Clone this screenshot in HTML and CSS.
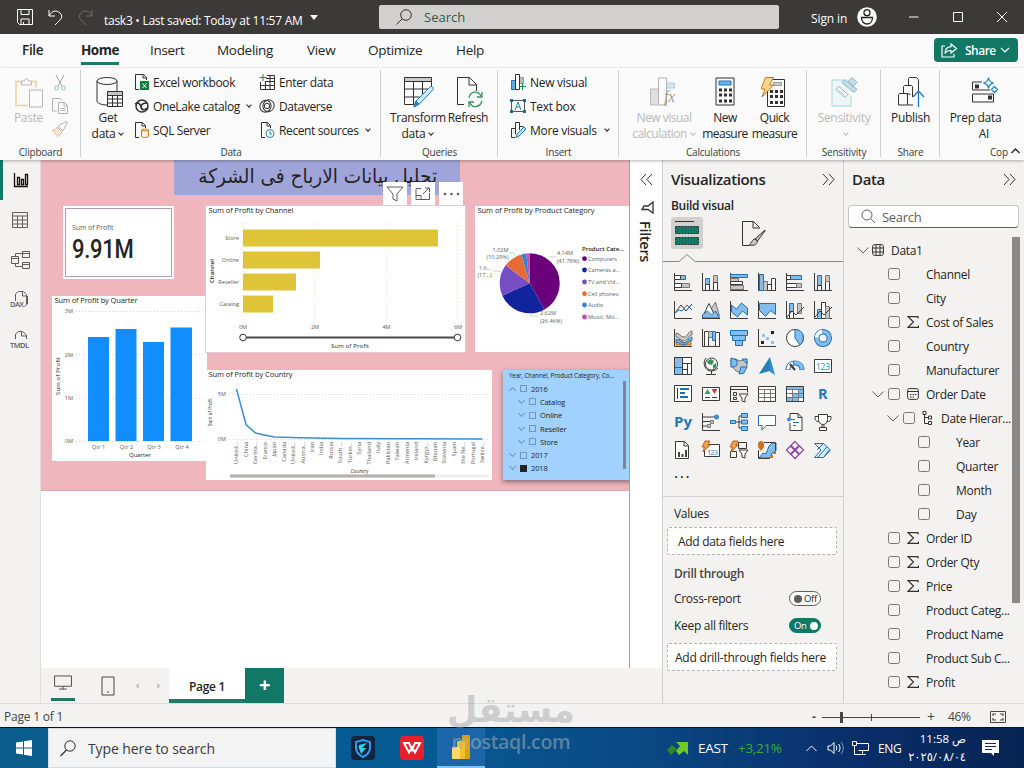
FILE: index.html
```html
<!DOCTYPE html>
<html lang="en">
  <head>
    <meta charset="UTF-8" />
    <meta name="viewport" content="width=device-width, initial-scale=1.0" />
    <title>task3</title>
    <link rel="stylesheet" href="styles.css">
  </head>
  <body>
    <div class="app">
      <header class="titlebar">
        <svg class="tb-save" width="16" height="16" viewBox="0 0 16 16"><path d="M.5.5h15v15h-13l-2-2zM4 .5v5h8v-5M4 15v-5h8v5M6.500 15v-2"/></svg>
        <svg class="tb-undo" width="15" height="16" viewBox="0 0 15 16"><path d="M1 1v6h6M1 7c3-6 8-6 11-3s2 5-1 8l-4 4"/></svg>
        <svg class="tb-redo" width="15" height="16" viewBox="0 0 15 16"><path d="M14 1v6H8M14 7C11 1 6 1 3 4s-2 5 1 8l4 4"/></svg>
        <span class="doc-name">task3 • Last saved: Today at 11:57 AM</span>
        <span class="caret"></span>
        <div class="title-search">
          <svg width="16" height="16" viewBox="0 0 16 16"><circle cx="10" cy="6" r="5.300"/><path d="M6 10l-5.500 5.500"/></svg>
          <span>Search</span>
        </div>
        <span class="signin">Sign in</span>
        <svg class="avatar" width="20" height="20" viewBox="0 0 20 20"><circle cx="10" cy="10" r="9.800" fill="#fff" stroke="none"/><circle cx="10" cy="5.700" r="3"/><path d="M4.500 10.500h11c0 4-2.500 6.500-5.500 6.500s-5.500-2.500-5.500-6.500z"/></svg>
        <svg class="win-btns" width="98" height="12" viewBox="0 0 98 12"><path d="M0 6h9.500M44.500 1.500h9v9h-9zM88 1l10 10M98 1L88 11"/></svg>
      </header>

      <nav class="tabs">
        <span class="tab file">File</span>
        <span class="tab home">Home</span>
        <span class="tab insert">Insert</span>
        <span class="tab modeling">Modeling</span>
        <span class="tab view">View</span>
        <span class="tab optimize">Optimize</span>
        <span class="tab help">Help</span>
        <button class="share">
          <svg width="17" height="15" viewBox="0 0 17 15"><path d="M4 3H1v11h12v-3M10 1l5.500 4.500L10 10V7.500c-3 0-5 1-6 3 0-4 2-6.500 6-6.800z"/></svg>
          Share
          <svg width="10" height="6" viewBox="0 0 10 6"><path d="M1 1l4 4 4-4"/></svg>
        </button>
      </nav>

      <section class="ribbon">
        <div class="group g-clip">
          <div class="body">
            <div class="big paste">
              <svg width="30" height="30" viewBox="0 0 30 30"><path stroke="#f3cfa0" stroke-width="1.500" d="M7 4H2v24h12M17 4h5v7"/><path stroke="#b8b6b4" fill="#fafafa" d="M7.500 3.500h3c0-3 4-3 4 0h3v4h-10zM15.500 12.500h13v17h-13z"/></svg>
              <span>Paste</span>
            </div>
            <div class="smalls clip">
              <svg width="16" height="16" viewBox="0 0 16 16"><path stroke="#a5a3a1" d="M4 0l6 11M12 0L6 11"/><circle cx="4.500" cy="13" r="2" stroke="#8fc3e4"/><circle cx="11.500" cy="13" r="2" stroke="#8fc3e4"/></svg>
              <svg width="16" height="16" viewBox="0 0 16 16"><path stroke="#b3b1af" d="M5 13H.5V.5H8l2 2M6.500 4.500h6l3 3v8h-9zM12 4.500v3.500h3.500M8.500 10.500h5M8.500 12.500h5"/></svg>
              <svg width="16" height="16" viewBox="0 0 16 16"><path stroke="#b3b1af" d="M6 5l5 5M8 4l6-3.500 1.500 1L12 8l-1 2-5-5z"/><path stroke="#efb68a" fill="#fbe8d8" d="M5 6l5 5c-1 2-2 3-4 4.500L.5 9C3 9 4 8 5 6z"/></svg>
            </div>
          </div>
          <div class="label">Clipboard</div>
        </div>

        <div class="group g-data">
          <div class="body">
            <div class="big getdata">
              <svg width="30" height="31" viewBox="0 0 30 31"><ellipse cx="14" cy="4" rx="10" ry="3.500"/><path d="M4 4v20c0 2 4 4 10 4M24 4v10"/><path fill="#fafafa" d="M14.500 14.500h15v15h-15z"/><path fill="#c8c6c4" d="M14.500 14.500h15v4h-15z"/><path d="M14.500 22h15M14.500 26h15M19.500 18v11.500M24.500 18v11.500"/></svg>
              <span>Get<br>data<i class="chev"></i></span>
            </div>
            <div class="smalls col1">
              <div class="row"><svg width="16" height="16" viewBox="0 0 16 16"><path d="M5 15.500H1.500V.5h8l3 3V6M9 .5V4h4"/><path fill="#107c41" stroke="none" d="M6 7h9v9H6z"/><path stroke="#fff" d="M8.500 9.500l4 4.500M12.500 9.500l-4 4.500"/></svg>Excel workbook</div>
              <div class="row"><svg width="16" height="16" viewBox="0 0 16 16"><circle cx="8" cy="8" r="6" stroke-width="1.500"/><path stroke-width="1.700" d="M1 6c4-2 5 0 6 3 1 4 4 3 6 1M7 9c0-3 3-4 6-4"/></svg>OneLake catalog<i class="chev wide"></i></div>
              <div class="row"><svg width="16" height="16" viewBox="0 0 16 16"><path d="M5 15.500H1.500V.5h7l3 3V6M8 .5V4h4"/><path stroke="#d67f1d" fill="#fff4e4" d="M7.500 8v6.500c1 1.300 6 1.300 7 0V8c-1-1.300-6-1.300-7 0zc1 1.300 6 1.300 7 0"/></svg>SQL Server</div>
            </div>
            <div class="smalls col2">
              <div class="row"><svg width="16" height="16" viewBox="0 0 16 16"><path d="M8 1.500h7.500v14H1.500V8M1.500 11.500h14M7 7.500h8.500M6.500 7v8.500M11 1.500v14M7 4.500h8"/><path stroke="#1d8a46" d="M4 0v7M.5 3.500h7"/></svg>Enter data</div>
              <div class="row"><svg width="16" height="16" viewBox="0 0 16 16"><ellipse cx="6.500" cy="8" rx="5.500" ry="6" transform="rotate(25 6 8)"/><ellipse cx="9.500" cy="8" rx="5.500" ry="6" transform="rotate(25 10 8)"/><circle cx="8" cy="8" r="2.700"/></svg>Dataverse</div>
              <div class="row"><svg width="16" height="16" viewBox="0 0 16 16"><path d="M6 15.500H2.500V.5h6l3 3V6M8 .5V4h4"/><circle cx="11" cy="11.500" r="4" stroke="#2a7fa8" fill="#fff"/><path stroke="#2a7fa8" d="M11 9v3h2"/></svg>Recent sources<i class="chev wide"></i></div>
            </div>
          </div>
          <div class="label">Data</div>
        </div>

        <div class="group g-queries">
          <div class="body">
            <div class="big">
              <svg width="32" height="31" viewBox="0 0 32 31"><path fill="#c8cbc8" d="M2.500 .5h27v4h-27z"/><path d="M29.500 4v6M2.500 4v23.500h10M2.500 12h24M2.500 20h15M11.500 4v23M20.500 4v13"/><path stroke="#2278b8" fill="#d6ecfb" d="M12 30l2-6L28 10c2-1.500 4 .5 3 2.500L17.500 27z"/><path fill="#2b88c9" stroke="#2278b8" d="M12 30l2-6 3 3z"/></svg>
              <span>Transform<br>data<i class="chev"></i></span>
            </div>
            <div class="big refresh">
              <svg width="30" height="31" viewBox="0 0 30 31"><path d="M11 27.500H4.500v-27h12l7 7V14M16 .5V8h8"/><path stroke="#3a9157" stroke-width="1.300" d="M16 21c1-7 9-8 12-2m1-4v5h-5M29 24c-2 7-10 7-12 2m-1 4v-5h5"/></svg>
              <span>Refresh</span>
            </div>
          </div>
          <div class="label">Queries</div>
        </div>

        <div class="group g-insert">
          <div class="body">
            <div class="smalls">
              <div class="row"><svg width="16" height="16" viewBox="0 0 16 16"><path fill="#62a9de" stroke="#2278b8" d="M1.500 6.500h4v9h-4z"/><path fill="#bbb" stroke="#999" d="M9.500 3.500h4v6h-4z"/><path fill="#fff" d="M5.500.5h4v15h-4z"/><path stroke="#1d8a46" d="M12.500 9v7M9 12.500h7"/></svg>New visual</div>
              <div class="row"><svg width="16" height="16" viewBox="0 0 16 16"><path stroke="#555" d="M1.500 2.500h13v11h-13z"/><path stroke="#2b88b9" d="M5 12l3-8 3 8M6 9h4"/><path fill="#22668f" stroke="none" d="M0 1h3v3H0zM13 1h3v3h-3zM0 12h3v3H0zM13 12h3v3h-3z"/></svg>Text box</div>
              <div class="row"><svg width="16" height="16" viewBox="0 0 16 16"><path d="M5 15.500H1.500v-9h4M5.500 12V.5h4V8M9.500 4.500h4"/><path stroke="#2278b8" fill="#bfe0f7" d="M6 15.500l1-3.500 7-7 2 2-7 7z"/></svg>More visuals<i class="chev wide"></i></div>
            </div>
          </div>
          <div class="label">Insert</div>
        </div>

        <div class="group g-calc">
          <div class="body">
            <div class="big off">
              <svg width="30" height="30" viewBox="0 0 30 30"><path stroke="#bbb" fill="#e1e0df" d="M1.500 11.500h8v16h-8z"/><path stroke="#a8d0ea" fill="#cfe6f5" d="M17.500 5.500h8v5h-8z"/><path stroke="#b3b1af" fill="#fafafa" d="M9.500.5h8v27h-8z"/><text x="15" y="24" class="fx">fx</text></svg>
              <span>New visual<br>calculation<i class="chev"></i></span>
            </div>
            <div class="big newm">
              <svg width="20" height="30" viewBox="0 0 20 30"><path d="M1 .5h18v27H1z"/><path fill="#6ab2e4" stroke="#2278b8" d="M4 3.500h12v4H4z"/><path stroke-width="3" stroke-dasharray="3 2" d="M4 12.500h13M4 17.500h13M4 23.500h13"/></svg>
              <span>New<br>measure</span>
            </div>
            <div class="big quick">
              <svg width="28" height="31" viewBox="0 0 28 31"><path d="M6.500 2.500h17v27h-17z"/><path fill="#ccc" stroke="#999" d="M12.500 5.500h8v3h-8z"/><path stroke-width="3" stroke-dasharray="3 2" d="M9 14.500h13M9 19.500h13M9 25.500h13"/><path fill="#fbd58c" stroke="#c47a1c" d="M4.500 .5h8L8.500 8h4L1 20l3-8H0z"/></svg>
              <span>Quick<br>measure</span>
            </div>
          </div>
          <div class="label">Calculations</div>
        </div>

        <div class="group g-sens">
          <div class="body">
            <div class="big off">
              <svg width="28" height="30" viewBox="0 0 28 30"><path stroke="#a9d2dd" fill="#eef6f9" d="M14 2.500H2v26h19V18"/><path stroke="#88b4c3" fill="#fff" d="M6 12l3-3 9 8-3 3z"/><path stroke="#88b4c3" fill="#c5dfe8" d="M12 5l3-3 12 10-3 3zM18 4l4-4 5 5-4 4z"/><path stroke="#a9d2dd" d="M8 12l7 6"/></svg>
              <span>Sensitivity<br><i class="chev"></i></span>
            </div>
          </div>
          <div class="label">Sensitivity</div>
        </div>

        <div class="group g-share">
          <div class="body">
            <div class="big">
              <svg width="28" height="31" viewBox="0 0 28 31"><path d="M1.500 28V17.500l1-1h8V28zM6.500 16V9.500l1-1h7l1 1V20M10.500 16.500l3 1M11.500 8V1.500l1-1h7l2 2V14M11 28h5"/><path stroke="#2278b8" stroke-width="1.300" d="M21.500 30V15M16 20l5.500-6 5.500 6"/></svg>
              <span>Publish</span>
            </div>
          </div>
          <div class="label">Share</div>
        </div>

        <div class="group g-prep">
          <div class="body">
            <div class="big">
              <svg width="26" height="30" viewBox="0 0 26 30"><path d="M10 4.500H.5v8H18M.5 16.500h21v8H.5z"/><path fill="#323130" stroke="none" d="M3 7h4v4H3zM16 18h4v4h-4z"/><path stroke="#2b88d8" stroke-width="1.300" d="M16.500 0c.6 4 2 5 5 5.500-3 .5-4.400 2-5 5.500-.6-3.500-2-5-5-5.500 3-.5 4.400-2 5-5.500zM22.500 9l3 3-3 3-3-3z"/></svg>
              <span class="prep-text">Prep data<br><b>AI</b></span>
            </div>
          </div>
          <div class="label">Cop</div>
          <svg class="collapse" width="9" height="6" viewBox="0 0 9 6"><path d="M.5 5l4-4 4 4"/></svg>
        </div>
      </section>

      <main class="workspace">
        <aside class="rail">
          <div class="rail-item active"><svg width="16" height="16" viewBox="0 0 16 16"><path stroke="#111" d="M1.500 1v13.500H15M4.500 5.500h2v7h-2zM8.500 7.500h2v5h-2zM12.500 2.500h2v10h-2z" stroke-width="1.300"/></svg></div>
          <div class="rail-item"><svg width="16" height="16" viewBox="0 0 16 16"><path d="M.5.500h15v15H.5zM.5 4h15M.5 8h15M.5 12h15M5.500 4v11.500M10.500 4v11.500"/></svg></div>
          <div class="rail-item"><svg width="19" height="18" viewBox="0 0 19 18"><path d="M.5 5.500h7v7h-7zM11.500 .5h7v6h-7zM11.500 11.500h7v6h-7zM.5 7.500h7M11.500 2.500h7M11.500 13.500h7M4.500 5V2.500h7M4.500 12.500v3h7"/></svg></div>
          <div class="rail-item"><svg width="20" height="18" viewBox="0 0 20 18"><path d="M5.500 10V3l3-2.500h5l3 3V13M12.500.5V5h4M17.500 5v8l-3 2.500"/><text x="0" y="15.500" textLength="14">DAX</text></svg></div>
          <div class="rail-item"><svg width="20" height="18" viewBox="0 0 20 18"><path d="M5.500 8V3l3-2.500h4l4 3.500v4M11.500.5V5h5"/><text x="0" y="16.500" textLength="19">TMDL</text></svg></div>
        </aside>

        <div class="center">
          <div class="stage">
            <div class="report">
              <div class="report-title" dir="rtl"><span>تحليل بيانات الارباح فى الشركة</span></div>

              <div class="visual card"><div><span>Sum of Profit</span><strong>9.91M</strong></div></div>

              <svg class="visual quarter" width="155" height="165" viewBox="52 296 155 165">
                <text class="vt" x="54.500" y="303" textLength="83">Sum of Profit by Quarter</text>
                <path class="grid" d="M76 311.500h127M76 354.500h127M76 398.500h127M76 441.500h127"/>
                <g class="ax end"><text x="73" y="313">3M</text><text x="73" y="357">2M</text><text x="73" y="400">1M</text><text x="73" y="443">0M</text></g>
                <path fill="#118dff" d="M88 337h21v104H88zM115.500 329h21v112h-21zM143 342h21v99h-21zM170.500 327.500h21.500v113.500h-21.500z"/>
                <g class="ax mid"><text x="98.500" y="449">Qtr 1</text><text x="126.500" y="449">Qtr 2</text><text x="154" y="449">Qtr 3</text><text x="182" y="449">Qtr 4</text></g>
                <text class="at" x="129" y="457" textLength="22">Quarter</text>
                <text class="at" transform="translate(60 395) rotate(-90)" textLength="38">Sum of Profit</text>
              </svg>

              <svg class="visual channel" width="259" height="146" viewBox="206 206 259 146">
                <text class="vt" x="208.500" y="213" textLength="85">Sum of Profit by Channel</text>
                <path class="grid gold" d="M243 223v97M314.500 223v97M386.500 223v97M457.500 223v97"/>
                <path fill="#e0c437" d="M243 229.500h195v17H243zM243 251.500h77v17H243zM243 273.500h53v17H243zM243 295.500h30v17H243z"/>
                <g class="ax end"><text x="239" y="240">Store</text><text x="239" y="262">Online</text><text x="239" y="284">Reseller</text><text x="239" y="306">Catalog</text></g>
                <g class="ax mid"><text x="243" y="329">0M</text><text x="315" y="329">2M</text><text x="386.500" y="329">4M</text><text x="458" y="329">6M</text></g>
                <path stroke="#4a4a4a" stroke-width="2" d="M243 337.500h215"/>
                <circle cx="243" cy="337.500" r="3.300" fill="#fff" stroke="#333"/><circle cx="457.500" cy="337.500" r="3.300" fill="#fff" stroke="#333"/>
                <text class="at" x="331" y="348" textLength="38">Sum of Profit</text>
                <text class="at bold" transform="translate(214 283) rotate(-90)" textLength="24">Channel</text>
              </svg>

              <svg class="visual category" width="155" height="146" viewBox="475 206 155 146">
                <text class="vt" x="477.500" y="213" textLength="117">Sum of Profit by Product Category</text>
                <g class="pie" transform="translate(529.700 283.300) rotate(-90)">
                  <circle r="15" pathLength="100" stroke="#6b007b" stroke-dasharray="41.780 100"/>
                  <circle r="15" pathLength="100" stroke="#12239e" stroke-dasharray="26.460 100" stroke-dashoffset="-41.780"/>
                  <circle r="15" pathLength="100" stroke="#744ec2" stroke-dasharray="17 100" stroke-dashoffset="-68.240"/>
                  <circle r="15" pathLength="100" stroke="#e66c37" stroke-dasharray="10.290 100" stroke-dashoffset="-85.240"/>
                  <circle r="15" pathLength="100" stroke="#2f80e0" stroke-dasharray="2.500 100" stroke-dashoffset="-95.530"/>
                  <circle r="15" pathLength="100" stroke="#c24aa8" stroke-dasharray="1.970 100" stroke-dashoffset="-98.030"/>
                </g>
                <path stroke="#bbb" stroke-width=".7" d="M549 257h5l2-1M509 253h5l2 3M492 271h6l3 1M531 314v2h7"/>
                <g class="ax mid"><text x="565" y="255">4.14M</text><text x="568" y="263">(41.78%)</text><text x="500.500" y="252">1.02M</text><text x="497.500" y="259">(10.29%)</text><text x="485" y="270">1.6...</text><text x="484.500" y="277">(17...)</text><text x="548" y="315">2.62M</text><text x="551" y="323">(26.46%)</text></g>
                <text class="at bold" x="582" y="251" textLength="42">Product Cate...</text>
                <g class="ax legend"><text x="588" y="261">Computers</text><text x="588" y="272">Cameras a...</text><text x="588" y="284">TV and Vid...</text><text x="588" y="296">Cell phones</text><text x="588" y="307">Audio</text><text x="588" y="319">Music, Mo...</text></g>
                <circle cx="584.500" cy="258.700" r="2.400" fill="#6b007b"/><circle cx="584.500" cy="270" r="2.400" fill="#12239e"/><circle cx="584.500" cy="282" r="2.400" fill="#744ec2"/><circle cx="584.500" cy="293.700" r="2.400" fill="#e66c37"/><circle cx="584.500" cy="305" r="2.400" fill="#2f80e0"/><circle cx="584.500" cy="317" r="2.400" fill="#c24aa8"/>
              </svg>

              <svg class="visual country" width="286" height="110" viewBox="206 370 286 110">
                <text class="vt" x="208.500" y="377" textLength="84">Sum of Profit by Country</text>
                <path class="grid" d="M229 394.500h260M229 439.500h260"/>
                <g class="ax end"><text x="226" y="396">5M</text><text x="226" y="441">0M</text></g>
                <path stroke="#3a8edb" stroke-width="1.500" d="M236.500 389l9.500 35.500 9.500 8.500 10 2.200 9 1.800 26 .8 40 .7 142 .4"/>
                <g class="ax end" id="countries"></g>
                <text class="at small" transform="translate(212 426) rotate(-90)" textLength="28" lengthAdjust="spacingAndGlyphs">Sum of Profit</text>
                <text class="at" x="350.500" y="473" textLength="18" lengthAdjust="spacingAndGlyphs">Country</text>
                <path stroke="#efeeed" stroke-width="3" d="M230 476h259"/><path stroke="#b3b0ad" stroke-width="3" d="M230 476h205"/>
              </svg>

              <div class="visual slicer">
                <div class="slicer-title">Year, Channel, Product Category, Co...</div>
                <div class="item open"><i></i><em></em>2016</div>
                <div class="item sub"><i></i><em></em>Catalog</div>
                <div class="item sub"><i></i><em></em>Online</div>
                <div class="item sub"><i></i><em></em>Reseller</div>
                <div class="item sub"><i></i><em></em>Store</div>
                <div class="item"><i></i><em></em>2017</div>
                <div class="item"><i></i><em class="on"></em>2018</div>
                <div class="thumb"></div>
              </div>

              <div class="visual-tools">
                <span><svg width="18" height="16" viewBox="0 0 18 16"><path d="M1 1h16l-6 7v7l-4-2V8z"/></svg></span>
                <span><svg width="16" height="14" viewBox="0 0 16 14"><path d="M6 1.500H1v11h13.500V6M1 8.500h5v4M8 7l6-6M10 1h4.500v4"/></svg></span>
                <span><svg class="dots" width="17" height="4" viewBox="0 0 17 4"><circle cx="2" cy="2" r="1.300"/><circle cx="8.500" cy="2" r="1.300"/><circle cx="15" cy="2" r="1.300"/></svg></span>
              </div>
            </div>
            <aside class="filters">
              <svg width="13" height="13" viewBox="0 0 13 13"><path d="M6 1L1 6.500 6 12M12 1L7 6.500 12 12"/></svg>
              <svg width="13" height="13" viewBox="0 0 13 13"><path stroke-width="1.300" d="M12 1v11L7 8.500H1L3 5h4z"/></svg>
              <span>Filters</span>
            </aside>
          </div>
          <footer class="pages">
            <svg class="desk" width="22" height="16" viewBox="0 0 22 16"><path d="M2 1h18v11H2zM11 12v3M7 15h8"/></svg>
            <svg width="14" height="20" viewBox="0 0 14 20"><path d="M1 1h12v18H1zM6 16h2"/></svg>
            <i class="arrow prev"></i><i class="arrow next"></i>
            <span class="page-tab">Page 1</span>
            <span class="add-page">+</span>
          </footer>
        </div>

        <aside class="viz">
          <div class="pane-head"><h2>Visualizations</h2><svg width="13" height="13" viewBox="0 0 13 13"><path d="M1 1l5 5.500L1 12M7 1l5 5.500L7 12"/></svg></div>
          <h3>Build visual</h3>
          <div class="modes">
            <span class="mode on"><svg width="26" height="26" viewBox="0 0 26 26"><path d="M1 1.500h19"/><path fill="#117865" stroke="#222" stroke-dasharray="2 1" d="M1.500 6.500h23v7h-23zM1.500 17.500h23v7h-23z"/></svg></span>
            <span class="mode"><svg width="25" height="25" viewBox="0 0 25 25"><path d="M8 24.500H1.500V.5h11l6 6M12 .5V7h7"/><path fill="#c8c6c4" d="M24 9L14 18l2.500 2L24 10zM14 18c-3 0-3 4-6 6 4 1 8 0 8.500-4z"/></svg></span>
          </div>
          <svg class="notch" width="180" height="8" viewBox="0 0 180 8"><path d="M0 7.500h16L24 .5l8 7h148"/></svg>
          <div class="gallery" id="gallery"></div>
          <div class="more">...</div>
          <div class="wells">
            <h4>Values</h4>
            <div class="well">Add data fields here</div>
            <h4 class="strong">Drill through</h4>
            <div class="opt">Cross-report<span class="toggle"><i></i>Off</span></div>
            <div class="opt">Keep all filters<span class="toggle on">On<i></i></span></div>
            <div class="well">Add drill-through fields here</div>
          </div>
        </aside>

        <aside class="data">
          <div class="pane-head"><h2>Data</h2><svg width="13" height="13" viewBox="0 0 13 13"><path d="M1 1l5 5.500L1 12M7 1l5 5.500L7 12"/></svg></div>
          <div class="field-search"><svg width="15" height="15" viewBox="0 0 15 15"><circle cx="6" cy="6" r="5"/><path d="M9.500 9.500L14 14"/></svg>Search</div>
          <div class="tree-wrap">
            <div class="tree" id="tree"></div>
            <div class="scroll"></div>
          </div>
        </aside>
      </main>

      <footer class="status">
        <span class="page-count">Page 1 of 1</span>
        <span class="minus">-</span>
        <svg width="98" height="12" viewBox="0 0 98 12"><path d="M0 6.500h98M49.500 3v7"/><path stroke-width="3" d="M19.500 1v11"/></svg>
        <span class="plus">+</span>
        <span class="pct">46%</span>
        <svg width="16" height="12" viewBox="0 0 16 12"><path d="M.5.500h15v11H.5z"/><path stroke-width="1.200" d="M3 5V3h3M10 3h3v2M13 7v2h-3M6 9H3V7"/></svg>
      </footer>

      <footer class="taskbar">
        <span class="start"><svg width="16" height="16" viewBox="0 0 16 16"><path fill="#fff" stroke="none" d="M0 2.500l7-1v6H0zM8 1.300L16 0v7.500H8zM0 8.500h7v6l-7-1zM8 8.500h8V16l-8-1.300z"/></svg></span>
        <div class="type-here"><svg width="16" height="17" viewBox="0 0 16 17"><circle cx="10" cy="6" r="5.200"/><path stroke-width="1.300" d="M6.500 10L.5 16"/></svg>Type here to search</div>
        <span class="app-icon"><svg width="24" height="24" viewBox="0 0 24 24"><rect width="24" height="24" rx="4" fill="#14243c" stroke="none"/><path stroke="#2b9cf0" stroke-width="2" d="M12 4l7 2v6c0 4-3 7-7 9-4-2-7-5-7-9V6z"/><path fill="#35d0e8" stroke="none" d="M8 9l8-2-5 5h4l-5 6c0-3-3-5-2-9z"/></svg></span>
        <span class="app-icon"><svg width="24" height="24" viewBox="0 0 24 24"><rect width="24" height="24" rx="4" fill="#e8202c" stroke="none"/><path stroke="#fff" stroke-width="2" d="M4 7h5l3 7 3-7h5l-5 9.500L12 11l-3 5.500z"/></svg></span>
        <span class="app-icon current"><svg width="20" height="24" viewBox="0 0 20 24"><rect x="11" width="8" height="24" rx="1" fill="#dba012" stroke="none"/><rect x="6" y="6" width="8" height="18" rx="1" fill="#f2c028" stroke="none"/><rect x="1" y="12" width="8" height="12" rx="1" fill="#fbdb63" stroke="none"/></svg></span>
        <div class="tray">
          <svg width="22" height="16" viewBox="0 0 22 16"><path fill="#2c8a1e" stroke="none" d="M0 10l5-5 5 4-6 6z"/><path fill="#6fc92c" stroke="none" d="M9 2h12v13l-4-4-5 4-3-4 4-5z"/></svg>
          <span class="east">EAST</span><span class="gain">+3,21%</span>
          <svg class="up" width="11" height="7" viewBox="0 0 11 7"><path d="M.5 6l5-5 5 5"/></svg>
          <svg class="snd" width="17" height="14" viewBox="0 0 17 14"><path d="M1 5h2.500L7 1.500v11L3.500 9H1z"/><path d="M9 4.500c1 1.500 1 3.500 0 5M11.500 3c2 2.500 2 5.500 0 8"/><path stroke="#7f97b8" d="M14 1c3 4 3 8 0 12"/></svg>
          <svg class="net" width="17" height="14" viewBox="0 0 17 14"><path d="M4.500 2.500h12v7h-10M.5.500h4v4h-4zM2.500 4.500v9h11M10.500 10v3"/></svg>
          <span class="lang">ENG</span>
          <div class="clock"><span>11:58 ص</span><span>٢٠٢٥/٠٨/٠٤</span></div>
          <svg class="note" width="17" height="16" viewBox="0 0 17 16"><path fill="#fff" stroke="none" d="M0 0h17v13h-5v3l-3-3H0z"/><path stroke="#0a2d66" d="M3 3.500h11M3 6.500h11M3 9.500h7"/></svg>
        </div>
      </footer>

      <div class="watermark"><span class="ar">مستقل</span><span class="en">mostaql.com</span></div>
    </div>

    <script>
      const countries = ["United...", "China", "Germa...", "France", "Japan", "Canada", "United...", "Austra...", "Iran", "India", "Russia", "South ...", "Turkm...", "Syria", "Thailand", "Italy", "Pakistan", "Taiwan", "Armenia", "Ireland", "Kyrgyz...", "Bhutan", "Slovenia", "Spain", "the Ne...", "Portugal", "Switze..."];
      document.getElementById("countries").innerHTML = countries
        .map((c, i) => `<text transform="translate(${(238.3 + i * 9.46).toFixed(1)} 442) rotate(-90)">${c}</text>`)
        .join("");

      // gallery icons, 18x18 each
      // k = outline, b = blue, g = gray, w = white, o = orange
      const axis = '<path class="k" d="M.5 0v17.500h17.500"/>';
      const visuals = [
        axis + '<path class="b" d="M6.500 2.500h5v4h-5z"/><path class="w" d="M.5 2.500h6v4h-6z"/><path class="g" d="M7.500 10.500h8v4h-8z"/><path class="w" d="M.5 10.500h7v4h-7z"/>',
        axis + '<path class="b" d="M3.500 5.500h4v6h-4z"/><path class="w" d="M3.500 11.500h4v6h-4z"/><path class="g" d="M11.500 2.500h4v7h-4z"/><path class="w" d="M11.500 9.500h4v8h-4z"/>',
        axis + '<path class="b" d="M.5 1.500h17v3h-17z"/><path class="g" d="M.5 5.500h8v3h-8z"/><path class="w" d="M.5 8.500h12v3h-12z"/><path class="g" d="M.5 12.500h13v4h-13z"/>',
        axis + '<path class="b" d="M1.500 1.500h4v16h-4z"/><path class="g" d="M5.500 8.500h4v9h-4z"/><path class="w" d="M9.500 11.500h4v6h-4z"/><path class="w" d="M13.500 5.500h4v12h-4z"/>',
        axis + '<path class="b" d="M4.500 2.500h11v4h-11z"/><path class="w" d="M.5 2.500h4v4h-4zM.5 10.500h10v4h-10z"/><path class="g" d="M10.500 10.500h5v4h-5z"/>',
        axis + '<path class="b" d="M3.500 2.500h4v10h-4z"/><path class="w" d="M3.500 12.500h4v5h-4zM11.500 8.500h4v9h-4z"/><path class="g" d="M11.500 2.500h4v6h-4z"/>',
        axis + '<path class="k" d="M1 12l6-8 5 6 6-7"/><path class="bl" fill="none" d="M1 12l4-3 3 1 5-6 5 5"/>',
        '<path class="g" d="M5 14.500L13.500 1l4 14z"/><path class="w" d="M1 15L7 2.500 13 15z"/><path class="b" d="M.5 17V14l5-4 4 4 4-4 4 7z"/><path class="k" d="M0 17.500h18"/>',
        axis + '<path class="b" d="M1.500 4l5 4 5-6 6 5v7l-5-4-5 6-6-5z"/>',
        axis + '<path class="b" d="M1.500 2.500h16v11l-5-4-5 6-6-6z"/>',
        axis + '<path class="b" d="M3.500 2.500h4v8h-4z"/><path class="g" d="M11.500 2.500h4v10h-4z"/><path class="w" d="M3.500 10.500h4v7h-4z"/><path class="k" d="M1 16l5-6 4 4 8-8"/>',
        axis + '<path class="b" d="M3.500 8.500h4v9h-4z"/><path class="w" d="M7.500 1.500h4v16h-4z"/><path class="g" d="M11.500 5.500h4v12h-4z"/><path class="k" d="M1 16l5-6 4 4 8-8"/>',
        axis + '<path class="o" d="M2 13l4-3 4 4 7-3v5H2z"/><path class="g" d="M2 4c4 0 4 4 8 4s4-6 8-6v4c-4 0-4 6-8 6s-4-4-8-4z"/><path class="b" d="M2 10c4 0 4 4 8 4s4-6 8-6v3c-4 0-4 5-8 5s-4-3-8-3z"/>',
        axis + '<path class="w" d="M2.500 2.500h4v15h-4zM13.500 3.500h4v14h-4z"/><path class="g" d="M6.500 2.500h4v6h-4z"/><path class="b" d="M10.500 2.500h3v9h-3z"/>',
        '<path class="b" d="M.5 1.500h17v5H.5zM2.500 6.500h13v5h-13zM5.500 11.500h7v5h-7z"/>',
        axis + '<path fill="#222" d="M13 2h3v3h-3zM3 12h3v3H3z"/><path fill="#8ec3ec" d="M4 5h3v3H4zM8 8h3v3H8zM13 12h3v3h-3z"/>',
        '<circle class="w" cx="9" cy="9" r="8.500"/><path class="b" d="M9 .5V9l5 7c5-4 5-15.500-5-15.500z"/>',
        '<circle cx="9" cy="9" r="6.300" fill="none" stroke="#1f6fb2" stroke-width="5.500"/><circle cx="9" cy="9" r="6.300" fill="none" stroke="#83bdec" stroke-width="3.500"/><path stroke="#fff" stroke-width="3.500" d="M2.700 8.500c0-3 2-5.500 5.300-5.800" fill="none"/>',
        '<path class="b" d="M.5.500h8v10h-8z"/><path class="b" d="M.5 10.500h8v7h-8z"/><path class="w" d="M8.500.500h9v17h-9z"/><path class="k" d="M8.500 6.500h9M13.500 6.500v11M8.500 12.500h5M.5.500h17v17H.5z"/>',
        '<circle class="w" cx="9.500" cy="7" r="6"/><path fill="#3a9157" d="M5 4l4-2 3 2-2 4-4-1zM11 8l3-2v4l-3 2z"/><path class="k" d="M4 1c-4 5-1 13 5 13 3 0 5-1 7-3M9.500 14v3M4 17.500h10"/>',
        '<path class="g" d="M1 2h5l3 2 8-2v8l-5 6-6-2-5-6z"/><path class="b" d="M1 1l6 2v5l-3 2H1zM11 10h6l-3 6-5 1zM12 2h5v5z"/>',
        '<path fill="#2d8fc9" d="M12 0l5 18-6-4-10 3z"/><path fill="#1d6a9c" d="M12 0l-1 14-10 3z" opacity=".45"/>',
        '<path d="M2 13c0-9.500 14-9.500 14 0" fill="none" stroke="#1f6fb2" stroke-width="5"/><path d="M8 6c5-1 8 2 8 6.500" fill="none" stroke="#83bdec" stroke-width="3.500"/><path d="M2 12.500C2 9 4 7 7 6" fill="none" stroke="#fff" stroke-width="3"/><path class="k" d="M9 13L4 7" stroke-width="2"/>',
        '<path class="w k" d="M.5 2.500h17v13H.5z"/><text x="2" y="12.500" textLength="14" class="n">123</text>',
        '<path class="w k" d="M.5.500h17v16H.5z"/><path class="bl" stroke-width="2" d="M6 4h9M6 8h5M6 12h8"/><path class="k" d="M3.500 3v11"/>',
        '<path class="w k" d="M.5 2.500h17v13H.5z"/><path fill="#3aa655" d="M2.500 9l3-5 3 5z"/><path fill="#d63b3b" d="M9.500 4h6l-3 5z"/><path class="k" d="M3 12.500h5M10 12.500h5"/>',
        '<path class="k" d="M9 16.500H.5v-15h17v6M.5 4.500h17M3.500 7.500h3v3h-3zM3.500 12.500h3v2h-3z"/><path class="w k" d="M9 9h9l-3 4v4l-3-1v-3z"/>',
        '<path class="w k" d="M.5 1.500h17v15H.5z"/><path class="thin" d="M.5 4.500h17M.5 8.500h17M.5 12.500h17M6.500 4v12M12.500 4v12"/>',
        '<path class="b" d="M.5 1.500h17v15H.5z"/><path fill="#fff" d="M1 5h5v3H1zM7 5h5v3H7zM1 9h5v3H1zM13 13h4v3h-4z"/><path class="thin" d="M.5 4.500h17M.5 8.500h17M.5 12.500h17M6.500 4v12M12.500 4v12"/><path class="k" d="M.5 1.500h17v15H.5z"/>',
        '<text x="4" y="14" class="r">R</text>',
        '<text x="0" y="14" class="r" textLength="18" lengthAdjust="spacingAndGlyphs">Py</text>',
        axis + '<path class="k" d="M1 4h13M1 8.500h10M1 13h6"/><circle cx="14.500" cy="4" r="2.500" fill="#3f8fd0"/><path class="g" d="M8.500 7.500h3v3h-3zM5.500 11.500h3v3h-3z"/>',
        '<path class="k" d="M5 9h4M9 3v12M9 3h3M9 9h3M9 15h3"/><path class="b" d="M.5 7.500h5v3h-5zM11.500.500h6v4h-6zM11.500 7h6v4h-6zM11.500 13.500h6v4h-6z"/>',
        '<path class="w bl" d="M.5 2.500h17v10H8L4 17v-4.500H.5z"/>',
        '<path class="w k" d="M4 6V.5h8l4 4v13H4V10M12 .5v4h4"/><circle cx="3" cy="6.500" r="2" fill="#3f8fd0"/><path class="bl" d="M5 6.500h4M7 9.500h6M7 12.500h3"/>',
        '<path class="w k" d="M4.500 1.500h9v5c0 3-2 5-4.500 5S4.500 9.500 4.500 6.500zM4.500 3.500H1c0 4 1 5 4 5M13.500 3.500H17c0 4-1 5-4 5M8 12v3M10 12v3M5.500 14.500h7v3h-7z"/>',
        '<path class="w k" d="M1.500.500h9l4 4v13h-13zM10 .5V5h4.500"/><path fill="#444" d="M4 11h2v5H4zM7.500 13h2v3h-2zM11 9h2v7h-2z"/>',
        '<path class="w k" d="M2.500 3.500h15v12h-15z"/><text x="5" y="13.500" textLength="11" class="n s">123</text><path class="o" d="M3 0h5L6 4h2L1 11l1.500-5H0z"/>',
        '<path class="k" d="M8.500 1.500h8v6h-8zM.5 10.500h6v6h-6z"/><path class="w k" d="M9 9h9l-3 4v4l-3-1v-3z"/><path class="o" d="M3 0h5L6 4h2L1 11l1.500-5H0z"/>',
        '<path class="b" d="M1 17l4-5 3 1 3-8 3-3h4v8l-4 2-2 5z"/><path class="k" d="M6 1.500h11.500v8M.5 9v8.500H12"/><path fill="#c9741f" d="M0 3c0-4 6-4 6 0v3l-3 4-3-4zM12 14h3v3h-3zM15 11h3v2h-3z"/>',
        '<path fill="#fbf3fb" stroke="#8f4a9e" stroke-width="1.300" d="M9 .5l4 4-4 4-4-4zM4.500 5l4 4-4 4-4-4zM13.500 5l4 4-4 4-4-4zM9 9.500l4 4-4 4-4-4z"/>',
        '<path class="bl" fill="#d9edfb" d="M.5 2.500h9L16.500 9l-7 7.500h-9L7 9zM9.500 2.500L3 9M13 6l-9 10M15 9l-5 7"/>'
      ];
      document.getElementById("gallery").innerHTML = visuals.map((v) => `<svg width="18" height="18" viewBox="0 0 18 18">${v}</svg>`).join("");

      const chev = '<svg class="tw" width="12" height="7" viewBox="0 0 12 7"><path d="M.5.500L6 6 11.500.5"/></svg>';
      const sigma = '<svg width="12" height="12" viewBox="0 0 12 12"><path stroke-width="1.200" d="M11 2.500V.6H1L6.500 6 1 11.400h10.500V9.500"/></svg>';
      const table = '<svg width="12" height="12" viewBox="0 0 12 12"><rect x=".6" y=".6" width="10.800" height="10.800" rx="2"/><path d="M.5 4h11M.5 8h11M4 .5v11M8 .5v11"/></svg>';
      const cal = '<svg width="12" height="12" viewBox="0 0 12 12"><rect x=".6" y=".6" width="10.800" height="10.800" rx="2"/><path d="M.5 3.500h11"/><path stroke-dasharray="1.500 1" d="M3 6.500h6.500M3 9h5"/></svg>';
      const hier = '<svg width="12" height="14" viewBox="0 0 12 14"><path d="M1 .5h3v3H1zM2.500 3.500v9h4M2.500 6.500h4M6.500 5h3v3h-3zM6.500 10.500h3v3h-3z"/></svg>';
      // [name, level, icon, expanded]
      const fields = [
        ["Channel", 1], ["City", 1], ["Cost of Sales", 1, sigma], ["Country", 1], ["Manufacturer", 1],
        ["Order Date", 1, cal, true], ["Date Hierar...", 2, hier, true],
        ["Year", 3], ["Quarter", 3], ["Month", 3], ["Day", 3],
        ["Order ID", 1, sigma], ["Order Qty", 1, sigma], ["Price", 1, sigma],
        ["Product Categ...", 1], ["Product Name", 1], ["Product Sub C...", 1], ["Profit", 1, sigma]
      ];
      document.getElementById("tree").innerHTML =
        `<div class="node root">${chev}<span class="ic">${table}</span>Data1</div>` +
        fields.map(([name, level, icon, open]) => `<div class="node l${level}"><span class="tg">${open ? chev : ""}</span><span class="box"></span><span class="ic">${icon || ""}</span>${name}</div>`).join("");
    </script>
  </body>
</html>
```

FILE: styles.css
```css
* {
  box-sizing: border-box;
}
body {
  margin: 0;
  font-family: "Open Sans", "Noto Sans", "DejaVu Sans", sans-serif;
  font-size: 12px;
  letter-spacing: -0.3px;
  color: #252423;
}
svg {
  fill: none;
  stroke: #323130;
  flex: none;
  display: block;
}
.app {
  position: relative;
  width: 1024px;
  height: 768px;
  overflow: hidden;
  display: flex;
  flex-direction: column;
  background: #f3f2f1;
}

/* title bar */
.titlebar {
  height: 34px;
  flex: none;
  display: flex;
  align-items: center;
  background: #3b3a39;
  color: #fff;
}
.titlebar svg {
  stroke: #fff;
}
.titlebar .tb-save {
  margin-left: 17px;
}
.tb-undo {
  margin-left: 15px;
}
.titlebar .tb-redo {
  margin-left: 15px;
  stroke: #6f6d6b;
}
.doc-name {
  margin: 6px 0 0 11px;
  width: 201px;
  white-space: nowrap;
  letter-spacing: -0.27px;
}
.caret {
  margin-left: 5px;
  border: 4.5px solid transparent;
  border-top: 5px solid #fff;
  border-bottom: 0;
}
.title-search {
  margin-left: 61px;
  width: 400px;
  height: 24px;
  background: #d2d0ce;
  border-radius: 2px;
  display: flex;
  align-items: center;
  gap: 12px;
  padding-left: 17px;
  color: #2b5a4b;
  font-size: 13px;
  letter-spacing: 0;
}
.title-search svg {
  stroke: #323130;
}
.signin {
  margin: 2px 0 0 32px;
  width: 46px;
  letter-spacing: -0.1px;
}
.titlebar .avatar {
  stroke: #222;
  stroke-width: 1.3;
}
.win-btns {
  margin-left: 32px;
}

/* ribbon tabs */
.tabs {
  height: 34px;
  flex: none;
  display: flex;
  background: #fafafa;
  font-size: 13.5px;
  position: relative;
}
.tab {
  height: 31px;
  line-height: 33px;
  white-space: nowrap;
}
.file {
  margin-left: 22px;
  width: 59px;
  font-weight: 600;
}
.home {
  width: 38px;
  font-weight: 700;
  letter-spacing: -0.5px;
  border-bottom: 3px solid #217867;
}
.insert {
  margin-left: 31px;
  width: 67px;
}
.modeling {
  width: 90px;
}
.view {
  width: 61px;
}
.optimize {
  width: 88px;
}
.help {
  width: 478px;
}
.share {
  margin: 4px 0 0;
  width: 84px;
  height: 24px;
  border: 0;
  border-radius: 4px;
  background: #117865;
  color: #fff;
  font: 600 12px "Open Sans", sans-serif;
  letter-spacing: -0.5px;
  display: flex;
  align-items: center;
  padding: 0 0 0 7px;
  gap: 7px;
}
.share svg {
  stroke: #fff;
  stroke-width: 1.2;
}
.share svg + svg {
  margin-left: -3px;
}

/* ribbon */
.ribbon {
  height: 92px;
  flex: none;
  display: flex;
  background: #fafafa;
  overflow: hidden;
  box-shadow: 0 1px 3px rgba(0, 0, 0, 0.3);
  z-index: 2;
}
.group {
  position: relative;
  flex: none;
  display: flex;
  flex-direction: column;
}
.group + .group::before {
  content: "";
  position: absolute;
  left: -1px;
  top: 2px;
  height: 87px;
  border-left: 1px solid #d2d0ce;
}
.body {
  height: 78px;
  display: flex;
}
.label {
  font-size: 10px;
  line-height: 15px;
  text-align: center;
  color: #3b3a39;
  letter-spacing: -0.2px;
}
.big {
  flex: none;
  padding-top: 9px;
  display: flex;
  flex-direction: column;
  align-items: center;
  text-align: center;
  line-height: 16px;
  white-space: nowrap;
}
.big svg {
  height: 31px;
  margin-bottom: 2px;
}
.smalls {
  padding-top: 2px;
  display: flex;
  flex-direction: column;
}
.row {
  height: 24px;
  display: flex;
  align-items: center;
  gap: 3px;
  white-space: nowrap;
}
.chev {
  display: inline-block;
  width: 4px;
  height: 4px;
  border: solid currentColor;
  border-width: 0 1.2px 1.2px 0;
  transform: rotate(45deg);
  margin: 0 1px 3px 4px;
}
.chev.wide {
  margin-left: 4px;
}
.g-clip {
  width: 81px;
}
.paste {
  width: 45px;
  padding-left: 12px;
  color: #bbb9b7;
}
.clip {
  padding: 7px 0 0 7px;
  gap: 7px;
}
.g-data {
  width: 300px;
}
.getdata {
  width: 53px;
  padding-left: 1px;
}
.col1 {
  width: 125px;
  letter-spacing: -0.38px;
}
.col2 {
  letter-spacing: -0.38px;
}
.col2 .row {
  gap: 4px;
}
.g-queries {
  width: 117px;
  padding-left: 9px;
}
.g-queries .label {
  margin-left: -9px;
}
.refresh {
  margin-left: 2px;
  letter-spacing: -0.4px;
}
.g-insert {
  width: 121px;
}
.g-insert .smalls {
  padding-left: 12px;
}
.g-insert .row {
  gap: 4px;
}
.g-calc {
  width: 188px;
}
.g-calc .big {
  width: 49px;
  letter-spacing: -0.5px;
}
.g-calc .big.off {
  width: 90px;
}
.g-calc .newm {
  width: 32px;
  margin: 0 9px 0 0;
}
.off {
  color: #bbb9b7;
}
.fx {
  font: italic 16px "Liberation Serif", serif;
  fill: #a19f9d;
  stroke: none;
}
.g-sens {
  width: 74px;
}
.g-sens .big,
.g-share .big {
  width: 100%;
}
.g-share {
  width: 59px;
}
.g-prep {
  width: 85px;
}
.g-prep .big {
  width: 90px;
}
.g-prep .label {
  text-align: left;
  padding-left: 50px;
}
.prep-text {
  margin-left: -19px;
}
.prep-text b {
  font-weight: 400;
  margin-left: 17px;
}
.collapse {
  position: absolute;
  right: 5px;
  top: 80px;
  stroke-width: 1.5;
}

/* workspace */
.workspace {
  height: 544px;
  flex: none;
  display: flex;
  border-bottom: 1px solid #dedcda;
}
.rail {
  width: 41px;
  border-right: 1px solid #e1dfdd;
}
.rail-item {
  height: 40px;
  display: flex;
  align-items: center;
  justify-content: center;
}
.rail-item svg {
  stroke: #605e5c;
}
.rail-item.active {
  border-left: 3px solid #117865;
  padding-right: 2px;
}
.rail-item text {
  font-size: 7.5px;
  font-weight: 600;
  fill: #605e5c;
  stroke: none;
  letter-spacing: 0;
}
.center {
  width: 621px;
  display: flex;
  flex-direction: column;
}
.stage {
  height: 508px;
  display: flex;
  background: #fff;
}
.report {
  position: relative;
  width: 588px;
  height: 331px;
  overflow: hidden;
  background: #efb7bd;
  box-shadow: inset 0 -1px 0 #e3a9b0;
}
.visual {
  position: absolute;
  background: #fff;
}
.report-title {
  position: absolute;
  left: 133px;
  top: 0;
  width: 286px;
  height: 35px;
  background: #a0a5d9;
  font: 20px "DejaVu Sans", sans-serif;
  letter-spacing: 0;
  line-height: 32px;
  padding-right: 23px;
  white-space: nowrap;
}
.report-title span {
  display: inline-block;
  transform: scaleX(0.925);
  transform-origin: right;
}
.card {
  left: 22px;
  top: 46px;
  width: 111px;
  height: 73px;
  padding: 2px;
}
.card div {
  height: 69px;
  border: 1px solid #b29bbd;
  padding: 14px 0 0 6px;
  display: flex;
  flex-direction: column;
}
.card span {
  font-size: 7px;
  line-height: 10px;
  letter-spacing: -0.1px;
  color: #605e5c;
}
.card strong {
  font: 500 25px "Roboto", sans-serif;
  line-height: 34px;
  color: #252423;
  transform: scaleX(0.88);
  transform-origin: left;
}
.quarter {
  left: 11px;
  top: 136px;
}
.channel {
  left: 165px;
  top: 46px;
  box-shadow: 0 0 0 1px #e6c9cf;
}
.category {
  left: 434px;
  top: 46px;
}
.country {
  left: 165px;
  top: 210px;
}
.visual text {
  stroke: none;
  letter-spacing: 0;
}
.vt {
  font-size: 7.5px;
  fill: #252423;
}
.ax text {
  font-size: 5.6px;
  fill: #605e5c;
}
.end text {
  text-anchor: end;
}
.mid text {
  text-anchor: middle;
}
.at {
  font-size: 6px;
  fill: #252423;
}
.at.small {
  font-size: 5px;
}
.at.bold {
  font-weight: 600;
}
.grid {
  stroke: #d0cecc;
  stroke-width: 0.8;
  stroke-dasharray: 1 2;
}
.grid.gold {
  stroke: #e8dba8;
}
.category > circle,
.channel path:nth-of-type(2) {
  stroke: none;
}
.pie circle {
  stroke-width: 30;
}
.quarter > path:not(.grid) {
  stroke: none;
}
.slicer {
  left: 462px;
  top: 210px;
  width: 140px;
  height: 110px;
  background: #a0d1ff;
  box-shadow: 0 2px 5px rgba(70, 50, 60, 0.6);
  font-size: 7.5px;
  letter-spacing: -0.15px;
  padding: 3px 0 0 6px;
}
.slicer-title {
  font-size: 6.2px;
  line-height: 6px;
  height: 9px;
  white-space: nowrap;
  letter-spacing: -0.1px;
}
.item {
  height: 13.3px;
  display: flex;
  align-items: center;
}
.item.sub {
  padding-left: 9px;
}
.item i {
  width: 5px;
  height: 5px;
  margin: -3px 5px 0 1px;
  border: solid #7199b9;
  border-width: 0 1px 1px 0;
  transform: rotate(45deg);
}
.item.open i {
  margin-top: 3px;
  transform: rotate(225deg);
}
.item em {
  width: 7px;
  height: 7px;
  margin-right: 4px;
  border: 1px solid #6f98b8;
}
.item em.on {
  background: #222;
  border-color: #222;
}
.thumb {
  position: absolute;
  left: 120px;
  top: 11px;
  width: 3px;
  height: 88px;
  background: #7e8791;
}
.visual-tools {
  position: absolute;
  left: 342px;
  top: 22px;
  display: flex;
  gap: 4px;
}
.visual-tools span {
  width: 24px;
  height: 23px;
  background: #fff;
  display: flex;
  align-items: center;
  justify-content: center;
}
.visual-tools svg {
  stroke: #605e5c;
}
.visual-tools .dots {
  fill: #605e5c;
  stroke: none;
}
.filters {
  width: 33px;
  height: 508px;
  border-left: 1px solid #a19f9d;
  display: flex;
  flex-direction: column;
  align-items: center;
  padding-top: 13px;
}
.filters svg + svg {
  margin: 15px 0 0 3px;
}
.filters span {
  writing-mode: vertical-rl;
  font-size: 14.5px;
  line-height: 18px;
  font-weight: 600;
  margin: 7px 2px 0 0;
}
.pages {
  height: 35px;
  display: flex;
  align-items: center;
}
.pages svg {
  stroke: #484644;
  margin-right: 26px;
}
.pages .desk {
  height: 26px;
  width: 24px;
  margin: 5px 26px 0 10px;
  padding-bottom: 8px;
  border-bottom: 3px solid #217867;
}
.arrow {
  border: 3.5px solid transparent;
}
.prev {
  border-right: 4px solid #c8c6c4;
  border-left: 0;
  margin-left: -6px;
}
.next {
  border-left: 4px solid #c8c6c4;
  border-right: 0;
  margin: 0 8px 0 18px;
}
.page-tab {
  width: 76px;
  height: 35px;
  background: #fff;
  border-bottom: 4px solid #217867;
  font-weight: 600;
  text-align: center;
  line-height: 37px;
}
.add-page {
  width: 39px;
  height: 35px;
  background: #117865;
  color: #fff;
  font-size: 20px;
  font-weight: 700;
  text-align: center;
  line-height: 33px;
}

/* panes */
.viz,
.data {
  border-left: 1px solid #d2d0ce;
}
.viz {
  width: 181px;
}
.data {
  width: 181px;
}
.pane-head {
  height: 38px;
  display: flex;
  align-items: center;
  justify-content: space-between;
  padding: 0 8px 0 8px;
}
h2,
h3,
h4 {
  margin: 0;
  font-weight: 600;
}
h2 {
  font-size: 15px;
  letter-spacing: -0.35px;
}
h3 {
  font-size: 12px;
  line-height: 16px;
  padding-left: 8px;
}
.modes {
  display: flex;
  gap: 34px;
  padding: 3px 0 0 8px;
}
.mode {
  width: 32px;
  height: 32px;
  border-radius: 3px;
  display: flex;
  align-items: center;
  justify-content: center;
}
.mode.on {
  background: #d2d0ce;
}
.notch {
  margin-top: 5px;
  stroke: #8a8886;
}
.gallery {
  display: grid;
  grid-template-columns: repeat(6, 18px);
  gap: 10px;
  padding: 11px 0 0 11px;
}
.gallery svg {
  stroke: none;
  overflow: visible;
}
.k {
  fill: none;
  stroke: #3b3a39;
}
.thin {
  stroke: #797775;
}
.b {
  fill: #83bdec;
  stroke: #1f6fb2;
}
.g {
  fill: #c8c6c4;
  stroke: #797775;
}
.w {
  fill: #fff;
  stroke: #3b3a39;
}
.w.bl {
  stroke: #1f6fb2;
}
.bl {
  stroke: #1f6fb2;
}
.o {
  fill: #f0a24a;
  stroke: #b9651b;
}
.gallery .n {
  font-size: 8.5px;
  fill: #2b88c9;
  letter-spacing: 0;
}
.gallery .s {
  font-size: 7.5px;
}
.gallery .r {
  font-size: 14.5px;
  font-weight: 700;
  fill: #2478b5;
  letter-spacing: 0;
}
.more {
  height: 38px;
  padding-left: 11px;
  font-size: 16px;
  line-height: 26px;
  letter-spacing: 1.5px;
  border-bottom: 1px solid #d2d0ce;
}
.wells {
  padding: 0 6px 0 4px;
}
.wells h4 {
  padding-left: 7px;
  font-size: 12px;
  line-height: 16px;
  margin: 9px 0 5px;
  font-weight: 400;
}
.wells h4.strong {
  margin: 11px 0 3px;
  font-weight: 600;
  color: #484644;
}
.well {
  height: 28px;
  border: 1px dashed #b3b0ad;
  background: #fff;
  line-height: 27px;
  padding-left: 10px;
  border-radius: 2px;
}
.opt {
  height: 27px;
  display: flex;
  align-items: center;
  justify-content: space-between;
  padding: 0 16px 0 7px;
}
.opt + .well {
  margin-top: 4px;
  padding-left: 7px;
  letter-spacing: -0.22px;
}
.toggle {
  width: 32px;
  height: 15px;
  border: 1px solid #605e5c;
  border-radius: 8px;
  background: #fff;
  display: flex;
  align-items: center;
  gap: 2px;
  padding-left: 4px;
  font-size: 9.5px;
}
.toggle i {
  width: 8px;
  height: 8px;
  border-radius: 50%;
  background: #605e5c;
}
.toggle.on {
  background: #117865;
  border-color: #117865;
  color: #fff;
  gap: 3px;
}
.toggle.on i {
  background: #fff;
}
.field-search {
  margin: 7px 5px 0 4px;
  height: 23px;
  border: 1px solid #c8c6c4;
  border-bottom-color: #605e5c;
  border-radius: 4px;
  background: #fff;
  display: flex;
  align-items: center;
  gap: 6px;
  padding-left: 12px;
  color: #605e5c;
  font-size: 13px;
}
.field-search svg {
  stroke: #605e5c;
}
.tree-wrap {
  display: flex;
  justify-content: space-between;
  padding: 7px 4px 0 0;
}
.tree {
  padding-top: 3px;
}
.node {
  height: 24px;
  display: flex;
  align-items: center;
  white-space: nowrap;
}
.root {
  padding-left: 13px;
}
.tw {
  stroke: #605e5c;
}
.root .ic {
  width: 19px;
  margin-left: 3px;
}
.tg {
  width: 16px;
}
.l1 {
  padding-left: 28px;
}
.l2 {
  padding-left: 43px;
}
.l3 {
  padding-left: 58px;
}
.box {
  width: 12px;
  height: 12px;
  border: 1px solid #797775;
  border-radius: 2.5px;
}
.ic {
  width: 26px;
}
.node:not(.root) .ic {
  padding-left: 7px;
}
.scroll {
  width: 8px;
  height: 366px;
  margin-top: 2px;
  background: #8a8886;
}

/* status bar */
.status {
  height: 24px;
  flex: none;
  display: flex;
  align-items: center;
  border-bottom: 1px solid #111;
  color: #484644;
  padding-top: 2px;
}
.status svg {
  stroke: #484644;
}
.page-count {
  padding-left: 4px;
  width: 812px;
  letter-spacing: -0.2px;
}
.minus {
  width: 10px;
  font-weight: 700;
}
.plus {
  margin-left: 7px;
  width: 21px;
  font-size: 14px;
}
.pct {
  width: 42px;
}

/* taskbar */
.taskbar {
  height: 40px;
  flex: none;
  display: flex;
  background: linear-gradient(90deg, #0a5c8b, #055b93 40%, #0a4b87 60%, #092d68 85%, #062452);
  color: #fff;
}
.start {
  width: 48px;
  display: flex;
  align-items: center;
  justify-content: center;
}
.type-here {
  width: 288px;
  background: #f3f3f4;
  border: 1px solid #d5dbe0;
  display: flex;
  align-items: center;
  gap: 12px;
  padding-left: 11px;
  font-size: 14px;
  letter-spacing: -0.1px;
  color: #3b3a39;
  margin-right: 3px;
}
.app-icon {
  width: 48px;
  margin-right: 1px;
  display: flex;
  align-items: center;
  justify-content: center;
}
.current {
  background: #1a66a8;
  border-bottom: 2px solid #84c4f5;
}
.tray {
  margin-left: auto;
  width: 357px;
  display: flex;
  align-items: center;
}
.tray svg {
  stroke: #fff;
}
.east {
  font-size: 13.5px;
  margin-left: 9px;
  width: 40px;
}
.gain {
  font-size: 13.5px;
  color: #35b035;
  width: 68px;
}
.snd {
  margin-left: 10px;
}
.net {
  margin-left: 8px;
}
.lang {
  margin-left: 9px;
  width: 30px;
}
.clock {
  width: 58px;
  display: flex;
  flex-direction: column;
  align-items: flex-end;
  font-size: 11.5px;
  line-height: 18px;
  white-space: nowrap;
}
.note {
  margin-left: 16px;
}

.watermark {
  position: absolute;
  left: 447px;
  top: 690px;
  width: 128px;
  display: flex;
  flex-direction: column;
  align-items: center;
  color: rgba(170, 174, 178, 0.55);
  font-size: 19.5px;
  font-weight: 600;
  z-index: 5;
}
.watermark .ar {
  font: 700 35px "DejaVu Sans", sans-serif;
  line-height: 41px;
  height: 41px;
  letter-spacing: 0;
}
.watermark .en {
  line-height: 22px;
}
```
